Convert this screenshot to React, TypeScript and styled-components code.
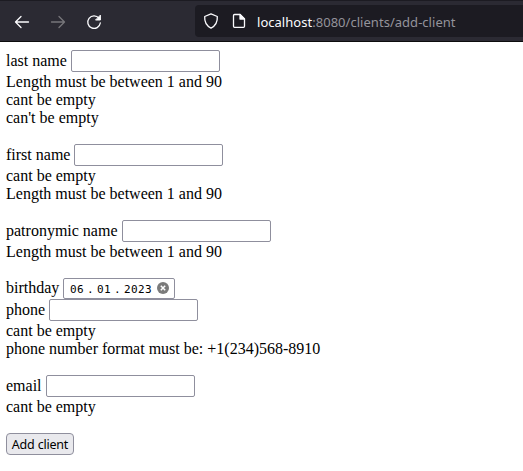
import React from "react";
import styled, { createGlobalStyle } from "styled-components";

const GlobalStyle = createGlobalStyle`
  * { box-sizing: border-box; }
  body {
    margin: 0;
    background: #fff;
    color: #000;
    font-family: "Liberation Serif", "Times New Roman", serif;
    font-size: 16px;
    overflow: hidden;
  }
`;

const Toolbar = styled.header`
  display: flex;
  height: 42px;
  padding: 5px 0 4px 10px;
  background: #2b2a33;
  border-top: 1px solid #1c1b22;
  border-bottom: 1px solid #0c0c0d;
`;

const NavButtons = styled.nav`
  display: flex;
  gap: 12px;
  width: 185px;
  padding-top: 4px;
`;

const NavButton = styled.button<{ $dim?: boolean }>`
  width: 24px;
  height: 24px;
  padding: 4px;
  border: 0;
  background: none;
  color: ${(p) => (p.$dim ? "#77767b" : "#fbfbfe")};
`;

const AddressBar = styled.div`
  display: flex;
  align-items: center;
  flex: 1;
  height: 32px;
  margin-top: -1px;
  padding-left: 8px;
  border-radius: 4px 0 0 4px;
  background: #1c1b22;
  color: #fbfbfe;
`;

const Icon = styled.svg`
  display: block;
  width: 16px;
  height: 16px;
  flex: none;
  fill: none;
  stroke: currentColor;
  stroke-width: 1.3;
  stroke-linecap: round;
  stroke-linejoin: round;
`;

const PageIcon = styled(Icon)`
  margin-left: 12px;
`;

const Url = styled.span`
  margin-left: 10px;
  padding-top: 2px;
  font: 13px/18px "Noto Sans", "Segoe UI", sans-serif;
  letter-spacing: 0.03px;
  white-space: nowrap;
`;

const UrlPath = styled.span`
  color: #94939b;
`;

const Form = styled.form`
  display: flex;
  flex-direction: column;
  align-items: flex-start;
  padding: 8px 6px 0;
`;

const Group = styled.div<{ $gap?: number }>`
  margin-bottom: ${(p) => p.$gap ?? 18}px;
`;

const Row = styled.label<{ $height?: number }>`
  display: flex;
  gap: 4px;
  height: ${(p) => p.$height ?? 22}px;
  line-height: ${(p) => (p.$height ? p.$height - 1 : 22)}px;
  white-space: nowrap;
`;

const Caption = styled.span<{ $width: number }>`
  width: ${(p) => p.$width}px;
`;

const TextInput = styled.input`
  width: 149px;
  height: 22px;
  padding: 1px 3px;
  border: 1px solid #8f8f9d;
  border-radius: 2px;
  background: #fff;
  outline: 0;
`;

const DateInput = styled.span`
  display: flex;
  align-items: center;
  justify-content: space-between;
  width: 112px;
  height: 21px;
  padding: 0 5px 0 6px;
  border: 1px solid #8f8f9d;
  border-radius: 2px;
  font: 11px/19px "DejaVu Sans Mono", monospace;
  letter-spacing: 0.35px;
`;

const DateParts = styled.span`
  display: flex;
  padding-top: 2px;
`;

const DatePart = styled.span<{ $width: number }>`
  width: ${(p) => p.$width}px;
  text-align: center;
`;

const ClearIcon = styled.svg`
  width: 12px;
  height: 12px;
  margin-bottom: 1px;
`;

const ErrorLine = styled.div`
  height: 18px;
  line-height: 20px;
  white-space: nowrap;
`;

const Submit = styled.button`
  width: 68px;
  height: 22px;
  padding: 1px 0 0;
  border: 1px solid #8f8f9d;
  border-radius: 4px;
  background: #e9e9ed;
  color: #000;
  font: 12.5px/20px "Noto Sans", "Segoe UI", sans-serif;
  letter-spacing: -0.2px;
  white-space: nowrap;
`;

interface FieldProps {
  label: string;
  width: number;
  errors: string[];
}

function Field({ label, width, errors }: FieldProps) {
  return (
    <Group>
      <Row>
        <Caption $width={width}>{label}</Caption>
        <TextInput type="text" />
      </Row>
      {errors.map((error) => (
        <ErrorLine key={error}>{error}</ErrorLine>
      ))}
    </Group>
  );
}

export default function App() {
  return (
    <>
      <GlobalStyle />
      <Toolbar>
        <NavButtons>
          <NavButton aria-label="Back">
            <Icon viewBox="0 0 16 16"><path d="M14.5 8H1.5M7 2.5L1.5 8L7 13.5" /></Icon>
          </NavButton>
          <NavButton $dim aria-label="Forward">
            <Icon viewBox="0 0 16 16"><path d="M1.5 8H14.5M9 2.5L14.5 8L9 13.5" /></Icon>
          </NavButton>
          <NavButton aria-label="Reload">
            <Icon viewBox="0 0 16 16">
              <path d="M13 4.2A6.3 6.3 0 1 0 14.3 9" />
              <path d="M14.4 1.5V6H9.9Z" fill="currentColor" strokeWidth="1" />
            </Icon>
          </NavButton>
        </NavButtons>
        <AddressBar>
          <Icon viewBox="0 0 16 16">
            <path d="M8 .9L14.3 3.5C14.7 8.8 12.4 12.8 8 15.1C3.6 12.8 1.3 8.8 1.7 3.5Z" />
          </Icon>
          <PageIcon viewBox="0 0 16 16">
            <path d="M3.5 1.5H9L13.5 6V13.3A1 1 0 0 1 12.5 14.3H3.5A1 1 0 0 1 2.5 13.3V2.5A1 1 0 0 1 3.5 1.5Z" />
            <path d="M9 1.5V6H13.5Z" fill="currentColor" />
          </PageIcon>
          <Url>localhost<UrlPath>:8080/clients/add-client</UrlPath></Url>
        </AddressBar>
      </Toolbar>
      <Form onSubmit={(e) => e.preventDefault()}>
        <Field
          label="last name"
          width={61}
          errors={["Length must be between 1 and 90", "cant be empty", "can't be empty"]}
        />
        <Field
          label="first name"
          width={64}
          errors={["cant be empty", "Length must be between 1 and 90"]}
        />
        <Field label="patronymic name" width={112} errors={["Length must be between 1 and 90"]} />
        <Group $gap={0}>
          <Row $height={21}>
            <Caption $width={53}>birthday</Caption>
            <DateInput>
              <DateParts>
                <DatePart $width={14}>06</DatePart>
                <DatePart $width={13}>.</DatePart>
                <DatePart $width={14}>01</DatePart>
                <DatePart $width={13}>.</DatePart>
                <DatePart $width={28}>2023</DatePart>
              </DateParts>
              <ClearIcon viewBox="0 0 12 12">
                <circle cx="6" cy="6" r="6" fill="#7b7b7b" />
                <path d="M3.8 3.8L8.2 8.2M8.2 3.8L3.8 8.2" stroke="#fff" strokeWidth="1.5" />
              </ClearIcon>
            </DateInput>
          </Row>
        </Group>
        <Field
          label="phone"
          width={39}
          errors={["cant be empty", "phone number format must be: +1(234)568-8910"]}
        />
        <Field label="email" width={36} errors={["cant be empty"]} />
        <Submit type="submit">Add client</Submit>
      </Form>
    </>
  );
}
